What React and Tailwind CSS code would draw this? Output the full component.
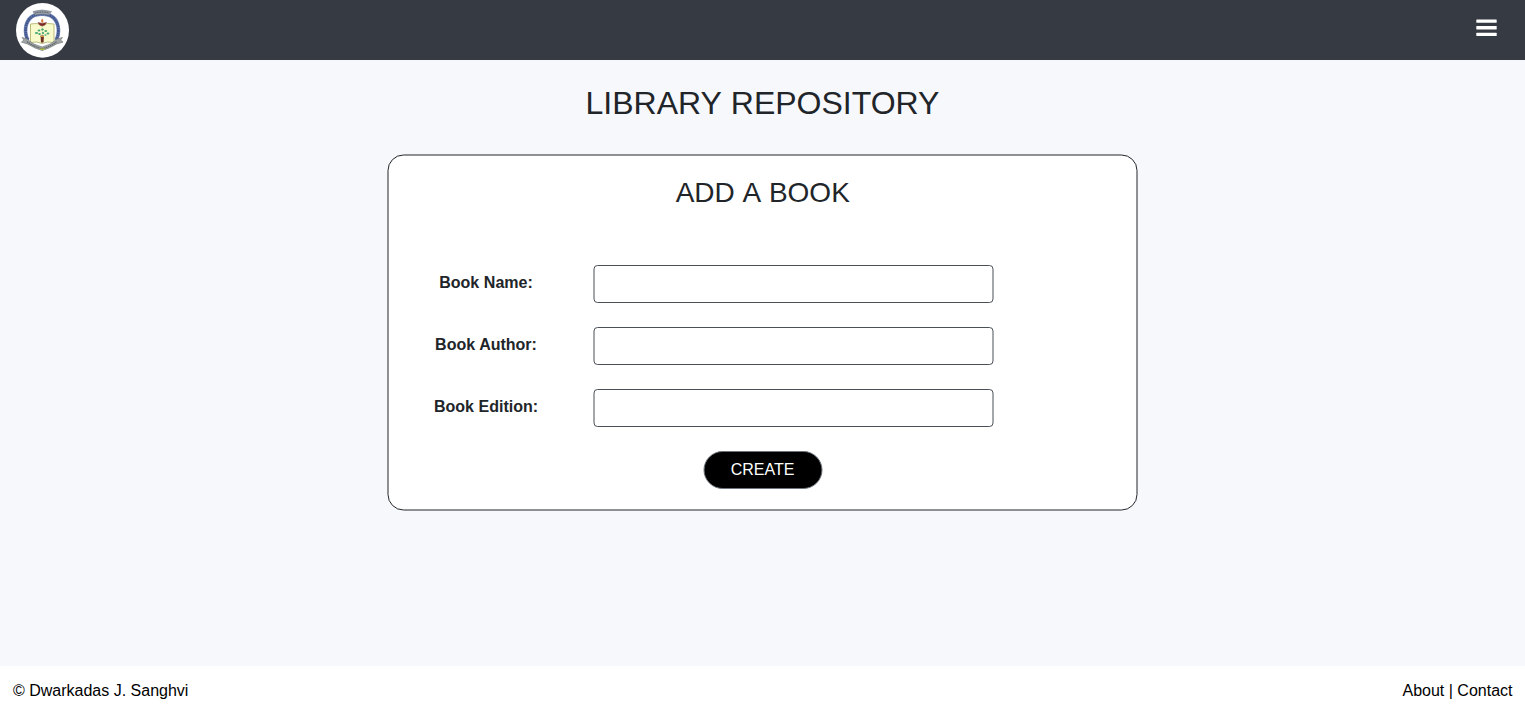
import React from "react";

function Emblem() {
  return (
    <svg viewBox="0 0 54 56" className="h-[56px] w-[54px]" aria-hidden="true">
      <ellipse cx="27.5" cy="28.3" rx="26.5" ry="27.4" fill="#fff" />
      <path d="M13 38 C10.500 34 10.300 29 10.800 25 C12.500 16 18.500 12 27 12 C35.500 12 41.500 16 43.200 25 C43.700 29 43.500 34 41 38" fill="none" stroke="#8e9fc8" strokeWidth="3.800" />
      <path d="M13 38 C10.500 34 10.300 29 10.800 25 C12.500 16 18.500 12 27 12 C35.500 12 41.500 16 43.200 25 C43.700 29 43.500 34 41 38" fill="none" stroke="#42578f" strokeWidth="2.800" strokeDasharray="2 .3" />
      <path d="M18 9.500 L20 13 Q27 11 34 13 L36.500 9.500 Q27 6.500 18 9.500Z" fill="#9ba1aa" stroke="#737b86" strokeWidth=".6" />
      <path d="M20 11 Q27 9 34 11" fill="none" stroke="#59616e" strokeWidth="1.100" strokeDasharray="1.200 .5" />
      <path d="M15.500 22 Q22 20.500 27.200 23 Q32 20.500 39 22 V40.500 Q32 39 27.200 41.500 Q22 39 15.500 40.500Z" fill="#f8facb" stroke="#b3b66f" strokeWidth=".9" />
      <path d="M27.200 24 V41" stroke="#d6d99b" strokeWidth=".7" />
      <path d="M23 20.500 Q27 22 31.500 20.500 Q30 24 27.200 24 Q24.500 24 23 20.500Z" fill="#7d2923" stroke="#92564c" strokeWidth=".6" />
      <path d="M27.200 16.500 Q29.500 19 27.200 21 Q25 19 27.200 16.500Z" fill="#d97b38" />
      <g fill="#45a878">
        <ellipse cx="21.500" cy="31" rx="1.600" ry="1.100" />
        <ellipse cx="24" cy="28.500" rx="1.400" ry="1.100" />
        <ellipse cx="27.500" cy="27.500" rx="1.400" ry="1.100" />
        <ellipse cx="30.800" cy="29" rx="1.400" ry="1.100" />
        <ellipse cx="33" cy="31.500" rx="1.400" ry="1.100" />
        <ellipse cx="24.500" cy="32" rx="1.300" ry=".9" />
        <ellipse cx="28" cy="31" rx="1.200" ry=".9" />
        <ellipse cx="30.500" cy="33" rx="1.200" ry=".8" />
      </g>
      <path d="M25.500 33.500 H29 L28.500 40.500 H26Z" fill="#6d3025" />
      <path d="M25.500 34.500 H29" stroke="#d39a43" strokeWidth="1" />
      <path d="M7 35.500 L12 37 Q18 43 27.200 45 Q36 43 42 37 L47.500 35.500 L45.500 38 L48 40 L41.500 42 Q34 46.500 27.200 48.500 Q20 46.500 12.500 42 L6.500 40 L9 38Z" fill="#a0a4a4" stroke="#73787a" strokeWidth=".7" />
      <path d="M12 39.500 Q19 44.800 27.200 46.800 Q35 44.800 42 39.500" fill="none" stroke="#5d6367" strokeWidth="1.200" strokeDasharray="1.500 .6" />
      <path d="M24.800 47.200 H29.800" stroke="#b8cc35" strokeWidth="1.200" />
    </svg>
  );
}

function Field({ id, label }) {
  return (
    <div className="flex h-[38px]">
      <label htmlFor={id} className="w-[188px] pt-[6px] text-center font-bold leading-6 [word-spacing:0.2px]">
        {label}
      </label>
      <input
        id={id}
        type="text"
        className="ml-[13px] h-[38px] w-[400px] rounded border border-[#495057] bg-white px-3 outline-none"
      />
    </div>
  );
}

export default function App() {
  return (
    <div className="flex h-screen flex-col bg-[#f7f8fc] font-['Liberation_Sans',sans-serif] text-base text-[#212529]">
      <header className="flex h-[60px] shrink-0 items-start justify-between bg-[#363a43] pl-[15px] pr-7">
        <div className="pt-[2px]">
          <Emblem />
        </div>
        <button type="button" aria-label="Menu" className="mt-[18px]">
          <svg width="21" height="19" viewBox="0 0 21 19" fill="#fff">
            <rect x=".3" y="1.500" width="20.400" height="3.300" rx=".5" />
            <rect x=".3" y="8.100" width="20.400" height="3.300" rx=".5" />
            <rect x=".3" y="14.700" width="20.400" height="3.300" rx=".5" />
          </svg>
        </button>
      </header>

      <main className="flex min-h-0 flex-1 flex-col items-center">
        <h1 className="mt-6 text-[32px] leading-[38px] [word-spacing:0.6px]">LIBRARY REPOSITORY</h1>
        <section className="mt-8 flex h-[356px] w-[750px] -translate-x-[0.5px] translate-y-[0.5px] flex-col rounded-[16px] border border-[#212529] bg-white">
          <h2 className="mt-5 pl-[1.5px] text-center text-[28px] leading-[34px] [word-spacing:1.5px]">ADD A BOOK</h2>
          <form
            className="mt-[55px] flex translate-y-[0.5px] flex-col gap-6 pl-1"
            onSubmit={(e) => e.preventDefault()}
          >
            <Field id="book-name" label="Book Name:" />
            <Field id="book-author" label="Book Author:" />
            <Field id="book-edition" label="Book Edition:" />
            <button
              type="submit"
              className="ml-[311px] h-[38px] w-[119.5px] rounded-[20px] border border-[#6c757d] bg-black pr-[0.5px] text-white"
            >
              CREATE
            </button>
          </form>
        </section>
      </main>

      <footer className="flex h-[50px] shrink-0 items-center justify-between bg-white pl-[13px] pr-[12.5px] text-black">
        <span>© Dwarkadas J. Sanghvi</span>
        <nav>
          <a href="#about">About</a> | <a href="#contact">Contact</a>
        </nav>
      </footer>
    </div>
  );
}
